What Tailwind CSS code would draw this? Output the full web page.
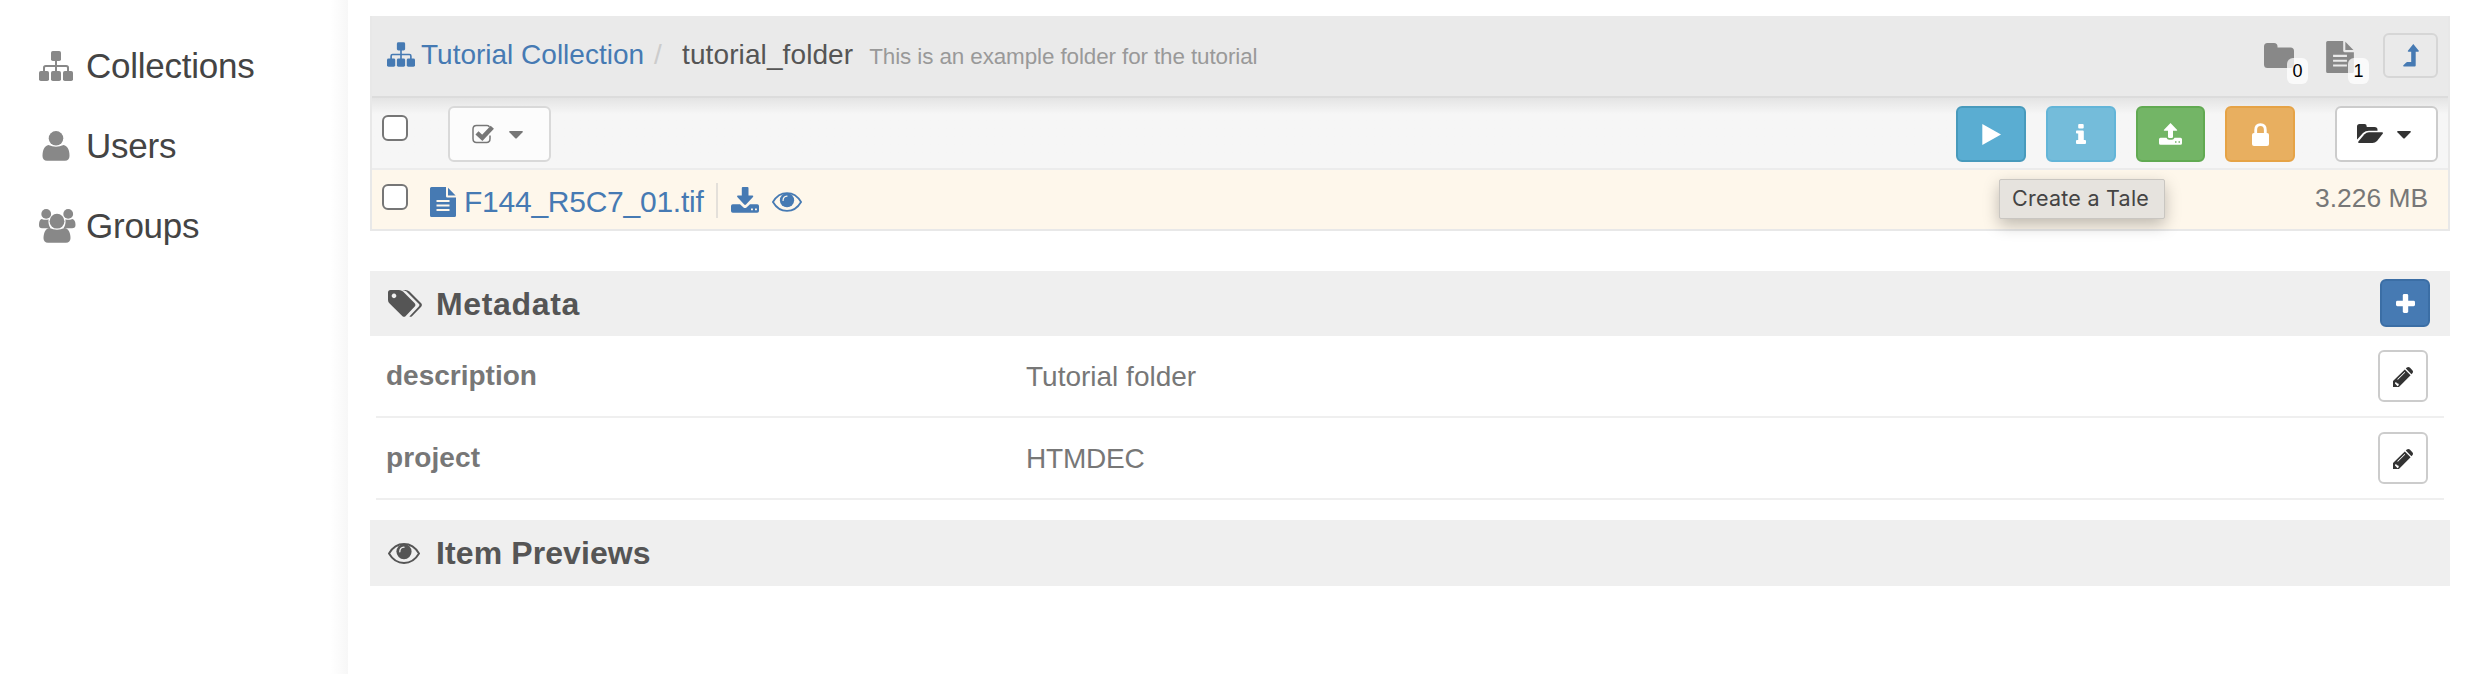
<!DOCTYPE html>
<html lang="en">
<head>
<meta charset="utf-8">
<title>tutorial_folder</title>
<script src="https://cdn.jsdelivr.net/npm/@tailwindcss/browser@4"></script>
</head>
<body class="h-[674px] w-[2468px] overflow-hidden bg-white font-['Liberation_Sans',Arial,sans-serif] whitespace-nowrap">
<svg class="hidden">
  <symbol id="sitemap" viewBox="0 0 34 30">
    <rect x="12" y="0" width="10" height="10" rx="1.8"/><rect x="0" y="20" width="10" height="10" rx="1.8"/><rect x="12" y="20" width="10" height="10" rx="1.8"/><rect x="24" y="20" width="10" height="10" rx="1.8"/>
    <path d="M17 9v12M5 21v-4.200q0-1.800 1.800-1.800h20.400q1.800 0 1.800 1.800V21" fill="none" stroke="currentColor" stroke-width="2"/>
  </symbol>
  <symbol id="file" viewBox="0 0 26 30">
    <path fill-rule="evenodd" d="M1.500 0H16v9.200q0 1.300 1.300 1.300H26v18q0 1.500-1.500 1.500h-23Q0 30 0 28.500V1.500Q0 0 1.500 0ZM6.500 13v1.900h13V13ZM6.500 17.500v1.900h13v-1.900ZM6.500 22v1.900h13V22Z"/>
    <path d="M18 .8 25.600 8.400H18Z"/>
  </symbol>
  <symbol id="eye" viewBox="0 0 32 21">
    <path d="M1 10.500C4.500 4.500 10 1 16 1s11.500 3.500 15 9.500C27.500 16.500 22 20 16 20S4.500 16.500 1 10.500Z" fill="none" stroke="currentColor" stroke-width="1.900"/>
    <circle cx="16" cy="8.600" r="7.600"/>
    <path d="M11.800 8.800q0-4.300 4.200-4.600" fill="none" stroke="var(--gap,#efefef)" stroke-width="1.300" stroke-linecap="round"/>
  </symbol>
  <symbol id="pencil" viewBox="0 0 20 20">
    <path fill-rule="evenodd" d="M0 20v-6L11.800 2.400 17.600 8.200 5.900 20ZM2 15.800v.8l1.400 1.300 1.200 1.300 1.300-1.200-.6-1.500-1.500-.3-.7-1.200ZM4.200 12.200l.7.6 7.300-7.200-.6-.7Z"/>
    <path d="M12.800 1.500 13.800.6q1.500-1.200 3 0l2.600 2.600q1.200 1.500 0 3l-1 1Z"/>
  </symbol>
  <symbol id="caret" viewBox="0 0 14 8"><path d="M.8 0h12.400q1 .4.400 1.300L8 7q-1 1-2 0L.4 1.300Q-.2.4.8 0Z"/></symbol>
</svg>
<div class="flex h-full">
  <nav class="flex w-[348px] shrink-0 flex-col bg-linear-to-r from-white from-95% to-[#f7f7f7] pt-[26px] text-[35px] tracking-[-0.250px] text-[#444]">
    <a class="flex h-20 items-center pl-[39px]"><svg class="mr-[13px] h-[30px] w-[34px] fill-current text-[#888]"><use href="#sitemap"/></svg>Collections</a>
    <a class="flex h-20 items-center pl-[39px]"><svg class="mr-[10px] h-[30px] w-[37px] fill-[#888]" viewBox="0 0 37 30"><circle cx="17" cy="7.300" r="7.300"/><path d="M9.500 14q7.500 3.600 15 0c4 .6 6 5 6 11 0 2.800-1.800 4.800-4.500 4.800H8c-2.700 0-4.500-2-4.500-4.800 0-6 2-10.400 6-11Z"/></svg>Users</a>
    <a class="flex h-20 items-center pl-[39px]"><svg class="mr-[10px] h-[34px] w-[37px] fill-[#888]" viewBox="0 0 37 34"><circle cx="7.200" cy="4.900" r="4.900"/><circle cx="29.200" cy="4.900" r="4.900"/><circle cx="18" cy="12.200" r="7.400"/><path d="M2.500 10q4.800 1.600 7 .2-.5 5.800 2 9-2.500.2-4 0H3q-3 0-3-3.200 0-5 2.500-6ZM33.500 10q-4.800 1.600-7 .2.500 5.800-2 9 2.500.2 4 0H33q3.500 0 3.500-3.200 0-5-3-6Z"/><path d="M10.500 19q7.500 3.600 15 0c4 .5 6 5 6 10.200 0 2.700-1.800 4.600-4.500 4.600H9c-2.700 0-4.500-1.900-4.500-4.600C4.500 24 6.500 19.500 10.500 19Z"/></svg>Groups</a>
  </nav>

  <main class="ml-[22px] flex w-[2080px] flex-col pt-4">
    <section class="h-[215px] border-x-2 border-b-2 border-[#e8e8e8]">
      <header class="flex h-[82px] justify-between border-b-2 border-[#dcdcdc] bg-[#eaeaea] pr-[10px] pl-[15px]">
        <div class="flex h-[77px] items-center">
          <svg class="mr-[6px] h-[25px] w-[28px] fill-current text-[#467ab3]"><use href="#sitemap"/></svg>
          <div class="flex items-baseline">
            <a class="text-[28px] text-[#467ab3]">Tutorial Collection</a>
            <span class="ml-[10px] w-[28px] text-[28px] text-[#ccc]">/</span>
            <span class="text-[28px] tracking-[0.100px] text-[#555]">tutorial_folder</span>
            <span class="ml-[16px] text-[22.400px] tracking-[-0.090px] text-[#999]">This is an example folder for the tutorial</span>
          </div>
        </div>
        <div class="flex items-start">
          <div class="relative mt-[27px] mr-[32px]"><svg class="h-[25px] w-[30px] fill-[#888]" viewBox="0 0 30 25"><path d="M3.500 0H10q3.500 0 3.500 3.500V4.500H26.500Q30 4.500 30 8v13.500q0 3.500-3.500 3.500h-23Q0 25 0 21.500v-18Q0 0 3.500 0Z"/></svg>
            <span class="absolute top-[15px] left-[23px] flex h-[26px] w-[21px] items-center justify-center rounded-[6px] bg-white/75 text-[18px] text-black">0</span></div>
          <div class="relative mt-[25px] mr-[29px]"><svg class="h-[32px] w-[28px] fill-current text-[#888]"><use href="#file"/></svg>
            <span class="absolute top-[17px] left-[22px] flex h-[26px] w-[21px] items-center justify-center rounded-[6px] bg-white/75 text-[18px] text-black">1</span></div>
          <button class="mt-[17px] flex h-[45px] w-[55px] items-center justify-center rounded-[6px] border-2 border-[#d6d6d6]"><svg class="h-[23px] w-[16px] fill-[#467ab3]" viewBox="0 0 16 23"><path d="M10.300 0 16 7q-.2.800-1 .8h-2.300V21.500q0 1-1 1H.8q-1-.4-.4-1.300L3.200 18.500q.5-.4 1-.4h4V7.800H5.500q-1-.4-.6-1Z"/></svg></button>
        </div>
      </header>
      <div class="flex h-[72px] items-start justify-between border-b-2 border-[#ececec] bg-[#f6f6f6] bg-linear-to-b from-[#e4e4e4] to-[#f6f6f6] to-[16px] pr-[10px] pl-[10px]">
        <div class="flex">
          <span class="mt-[17px] size-[26px] rounded-[6px] border-2 border-[#767676] bg-white"></span>
          <button class="mt-2 ml-[40px] flex h-[56px] w-[103px] items-center rounded-[6px] border-2 border-[#d9d9d9] bg-[#fcfcfc] pl-[22px] text-[#777]">
            <svg class="h-[20px] w-[22px]" viewBox="0 0 22 20"><path d="M17.300 3Q17 1.500 15 1.500H4.500Q1 1.500 1 5v9.500Q1 18.500 4.500 18.500h10q3.500 0 3.500-4v-3" fill="none" stroke="currentColor" stroke-width="1.500"/><path d="M5 8.800l5.300 5L20.300 3.200" fill="none" stroke="currentColor" stroke-width="4.500"/></svg>
            <svg class="mt-[2px] ml-[15px] h-[8px] w-[14px] fill-current"><use href="#caret"/></svg>
          </button>
        </div>
        <div class="flex pt-2">
          <button class="flex h-[56px] w-[70px] items-center justify-center rounded-[6px] border-2 border-[#489abc] bg-[#5aadd2]"><svg class="h-[21px] w-[19px] fill-white" viewBox="0 0 19 21"><path d="M.3 0 19 10.500.3 21Z"/></svg></button>
          <button class="ml-5 flex h-[56px] w-[70px] items-center justify-center rounded-[6px] border-2 border-[#63b5d8] bg-[#74bcda]"><svg class="h-[20px] w-[10px] fill-white" viewBox="0 0 10 20"><rect x="2.200" y="0" width="5.500" height="4.500" rx="1"/><path d="M.8 6.500h6q1 0 1 1v8.500H9q1 0 1 1v2q0 1-1 1H1q-1 0-1-1v-2q0-1 1-1h1.200V9.500H.8q-.8 0-.8-1v-1q0-1 .8-1Z"/></svg></button>
          <button class="ml-5 flex h-[56px] w-[69px] items-center justify-center rounded-[6px] border-2 border-[#61aa52] bg-[#73b566]"><svg class="h-[22px] w-[23px] fill-white" viewBox="0 0 23 22"><path d="M11.500 0 18.200 7q.2.800-.6.800H14v6q0 1.200-1.200 1.200h-2.600Q9 15 9 13.800v-6H5.400q-.8 0-.6-.8Z"/><path fill-rule="evenodd" d="M1.500 14.800H7.500q.8 2 2.500 2h3q1.700 0 2.500-2h6q1.500 0 1.500 1.500v4q0 1.500-1.500 1.500h-20Q0 21.800 0 20.300v-4q0-1.500 1.500-1.500ZM16 18.200v1.500h1.500v-1.500ZM19.500 18.200v1.500H21v-1.500Z"/></svg></button>
          <button class="ml-5 flex h-[56px] w-[70px] items-center justify-center rounded-[6px] border-2 border-[#e6a346] bg-[#e8af60]"><svg class="h-[23px] w-[17px] fill-white" viewBox="0 0 17 23"><rect x="0" y="10" width="17" height="13" rx="2"/><path d="M3.700 11V7q0-5.300 4.800-5.300T13.300 7v4" fill="none" stroke="white" stroke-width="2.800"/></svg></button>
          <button class="ml-[40px] flex h-[56px] w-[103px] items-center rounded-[6px] border-2 border-[#ccc] bg-white pl-[20px] text-[#333]"><svg class="mb-[2px] h-[19px] w-[26px] fill-current" viewBox="0 0 26 19"><path d="M2.500 0H7.500Q9.700 0 9.700 2.200V3H17.500q3 0 3 2.800v.9H12Q8.500 6.700 6 9L.2 15.500Q0 15 0 14V2.500Q0 0 2.500 0Z"/><path d="M12 8.200H25q1.500.3.700 1.500L20 17q-2 2-4.500 2H2q-1.300-.3-.6-1.500L7.500 10.300Q9.500 8.200 12 8.200Z"/></svg><svg class="mt-[2px] ml-[14px] h-[8px] w-[14px] fill-current"><use href="#caret"/></svg></button>
        </div>
      </div>
      <div class="relative flex h-[59px] items-center justify-between bg-[#fef7eb] pr-[20px] pl-[10px]">
        <div class="flex items-center text-[#467ab3]">
          <span class="-mt-[5px] size-[26px] rounded-[6px] border-2 border-[#767676] bg-white"></span>
          <svg class="mt-[4px] ml-[22px] h-[30px] w-[26px] fill-current"><use href="#file"/></svg>
          <a class="mt-[4px] ml-[8px] w-[252px] text-[30px] tracking-[-0.250px]">F144_R5C7_01.tif</a>
          <span class="mt-[2px] h-[35px] w-[2px] bg-[#e4e0da]"></span>
          <svg class="mt-[1px] ml-[13px] h-[26px] w-[28px] fill-current" viewBox="0 0 28 26"><path d="M11.800 0h4.700q1 0 1 1v7.500h4q1.400.3.500 1.500l-7 7.500q-.9.800-1.800 0L6.300 10q-.8-1.200.5-1.500h4V1q0-1 1-1Z"/><path fill-rule="evenodd" d="M1.800 17.200H9l3.500 3.200q1.500 1 3 0L19 17.200h7.200q1.800 0 1.800 1.800v5q0 1.800-1.800 1.800H1.800Q0 25.800 0 24v-5q0-1.800 1.800-1.800ZM20 21.500v1.700h1.900v-1.700ZM24 21.500v1.700h1.900v-1.700Z"/></svg>
          <svg class="mt-[5px] ml-[13px] h-[20px] w-[30px] fill-current [--gap:#fef7eb]"><use href="#eye"/></svg>
        </div>
        <span class="-mt-px text-[26.400px] text-[#777]">3.226 MB</span>
        <div class="absolute top-[8.500px] left-[1627px] flex h-[40px] w-[166px] items-center rounded-[2px] border border-[#c9c6c1] bg-[#e6e3de] pl-[12px] font-[Inter,sans-serif] text-[21.500px] tracking-[0.250px] text-[#444] shadow-[0_6px_16px_rgba(0,0,0,0.25)]">Create a Tale</div>
      </div>
    </section>

    <section class="mt-[40px]">
      <h2 class="flex h-[65px] items-center bg-[#efefef] pr-5 pl-[18px] text-[32px] font-bold text-[#555]">
        <svg class="mr-[14px] h-[27px] w-[34px] fill-current" viewBox="0 0 34 27"><path fill-rule="evenodd" d="M2.500 0H11q2.300 0 4 1.500L26.500 13q1.800 1.900 0 3.800L17.500 26.200q-1.500 1.300-3 0L1.600 13.500Q0 12 0 10V2.500Q0 0 2.500 0ZM6 3.600a2.300 2.300 0 1 0 .01 0Z"/><path d="M14 0h3.500q2.300 0 4 1.500L33.200 13.300q1.400 1.700 0 3.400L24 26.200q-1.200 1-2.600.3L31 16.300q.9-1.200 0-2.400L18.500 1.600Q16.500.2 14 0Z"/></svg>
        <span class="flex-1 tracking-[0.650px]">Metadata</span>
        <button class="-mt-[1px] flex h-[48px] w-[50px] items-center justify-center rounded-[6px] border-2 border-[#3b6ea5] bg-[#467ab3]"><svg class="size-[19px] fill-white" viewBox="0 0 19 19"><rect x="6.800" width="5.400" height="19" rx="1.400"/><rect y="6.800" width="19" height="5.400" rx="1.400"/></svg></button>
      </h2>
      <div class="mx-[6px] text-[28px] text-[#777]">
        <div class="flex h-[82px] items-center border-b-2 border-[#efefef] pr-4 pl-[10px]"><b class="w-[640px]">description</b><span class="mt-px flex-1">Tutorial folder</span><button class="flex h-[52px] w-[50px] items-center justify-center rounded-[6px] border-2 border-[#ccc] bg-white"><svg class="mt-[1px] size-[20px] fill-[#333]"><use href="#pencil"/></svg></button></div>
        <div class="flex h-[82px] items-center border-b-2 border-[#efefef] pr-4 pl-[10px]"><b class="w-[640px] tracking-[0.100px]">project</b><span class="mt-px flex-1 tracking-[-0.200px]">HTMDEC</span><button class="flex h-[52px] w-[50px] items-center justify-center rounded-[6px] border-2 border-[#ccc] bg-white"><svg class="mt-[1px] size-[20px] fill-[#333]"><use href="#pencil"/></svg></button></div>
      </div>
    </section>
    <h2 class="mt-5 flex h-[66px] items-center bg-[#efefef] pl-[18px] text-[32px] font-bold tracking-[0.100px] text-[#555]"><svg class="mr-[16px] h-[21px] w-[32px] fill-current"><use href="#eye"/></svg>Item Previews</h2>
  </main>
</div>
</body>
</html>
